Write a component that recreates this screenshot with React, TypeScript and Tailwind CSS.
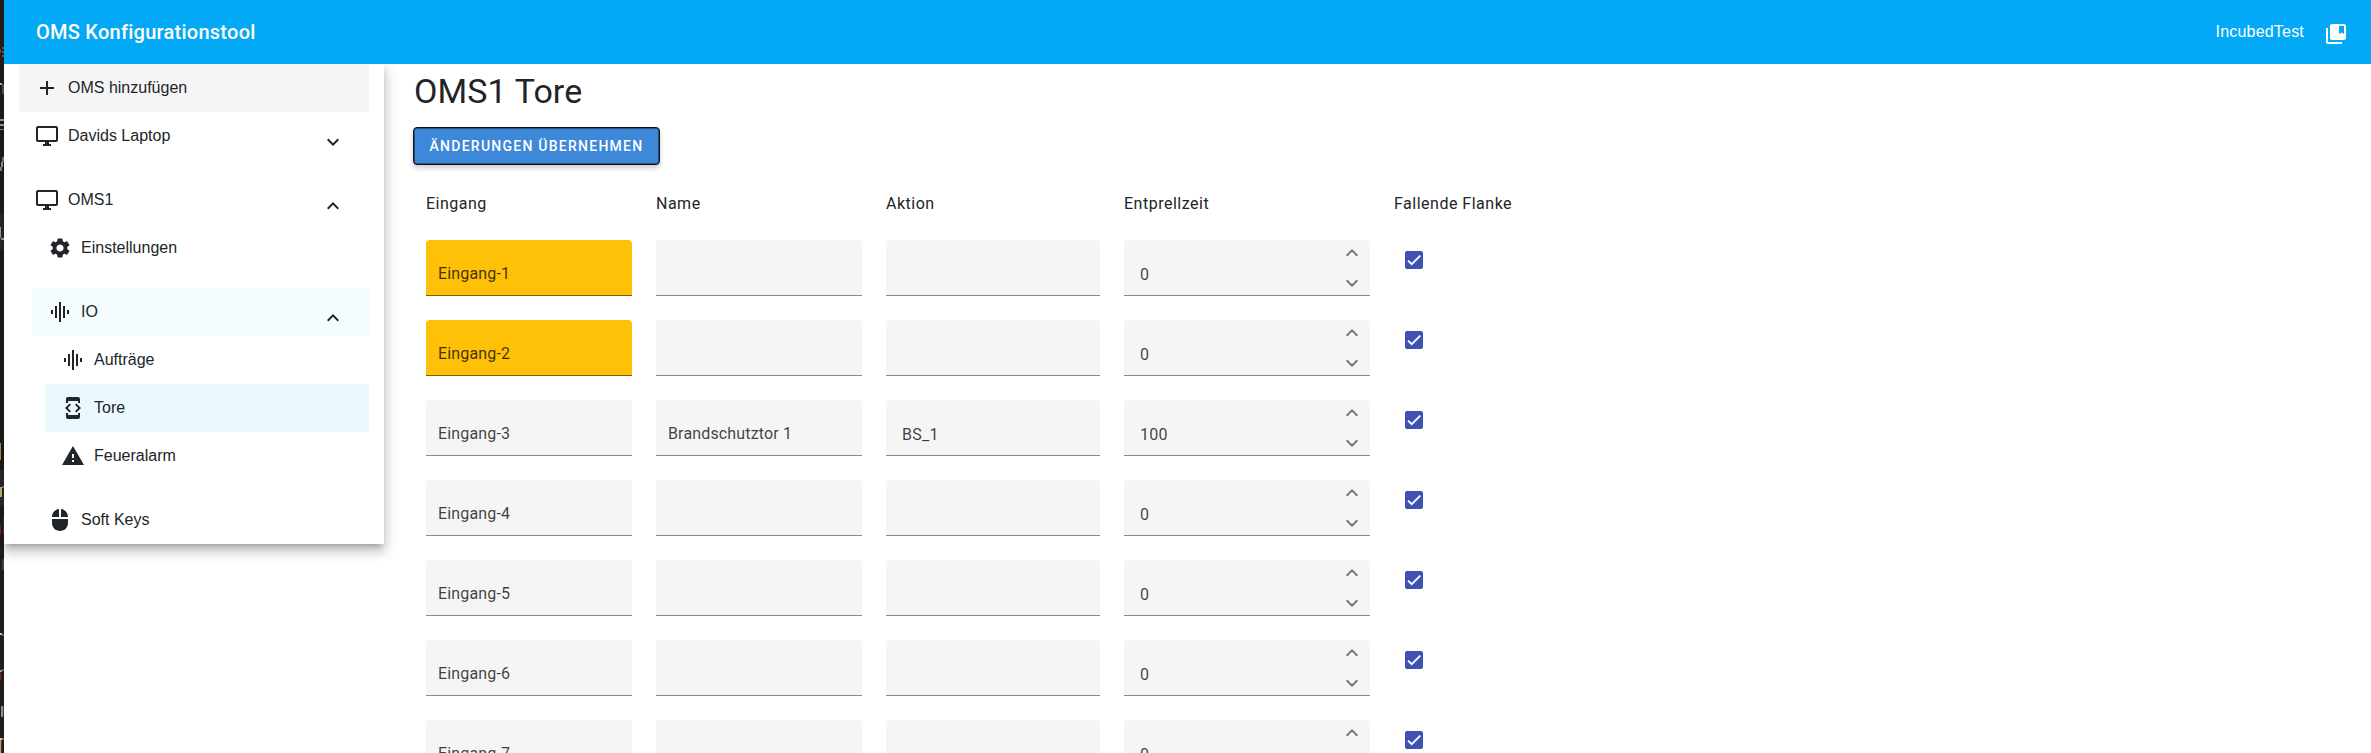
import type { ReactNode } from "react";
import {
  MdAdd,
  MdCollectionsBookmark,
  MdDeveloperMode,
  MdExpandLess,
  MdExpandMore,
  MdGraphicEq,
  MdMouse,
  MdSettings,
  MdWarning,
} from "react-icons/md";

type NavProps = {
  icon: ReactNode;
  label: string;
  className?: string;
  expanded?: boolean;
};

function DesktopIcon() {
  return (
    <svg viewBox="0 0 24 24" className="size-6" fill="currentColor">
      <path d="M21 2H3c-1.1 0-2 .9-2 2v12c0 1.1.9 2 2 2h7v2H8v2h8v-2h-2v-2h7c1.1 0 2-.9 2-2V4c0-1.1-.9-2-2-2zm0 14H3V4h18v12z" />
    </svg>
  );
}

function NavItem({ icon, label, className = "", expanded }: NavProps) {
  return (
    <div className={`flex h-12 shrink-0 items-center pl-4 pr-6 text-[#212529] ${className}`}>
      <span className="size-6 text-[24px]">{icon}</span>
      <span className="ml-[9px] grow font-['Liberation_Sans',Arial,sans-serif] text-[16px] leading-6">{label}</span>
      {expanded !== undefined && (
        <span className="pt-3 text-[24px]">{expanded ? <MdExpandLess /> : <MdExpandMore />}</span>
      )}
    </div>
  );
}

function Sidebar() {
  return (
    <nav className="flex h-[480px] w-[380px] shrink-0 flex-col bg-white pl-[15px] pr-[15px] shadow-[0_5px_5px_-3px_rgba(0,0,0,0.2),0_8px_10px_1px_rgba(0,0,0,0.14),0_3px_14px_2px_rgba(0,0,0,0.12)]">
      <NavItem icon={<MdAdd />} label="OMS hinzufügen" className="bg-[#f5f5f5]" />
      <NavItem icon={<DesktopIcon />} label="Davids Laptop" expanded={false} />
      <NavItem icon={<DesktopIcon />} label="OMS1" expanded className="mt-4" />
      <NavItem icon={<MdSettings />} label="Einstellungen" className="ml-[13px]" />
      <NavItem icon={<MdGraphicEq />} label="IO" expanded className="ml-[13px] mt-4 bg-[#f5fcff]" />
      <NavItem icon={<MdGraphicEq />} label="Aufträge" className="ml-[26px]" />
      <NavItem icon={<MdDeveloperMode />} label="Tore" className="ml-[26px] bg-[#ebf8fe]" />
      <NavItem icon={<MdWarning />} label="Feueralarm" className="ml-[26px]" />
      <NavItem icon={<MdMouse />} label="Soft Keys" className="ml-[13px] mt-4" />
    </nav>
  );
}

type Row = { input: string; name?: string; action?: string; debounce: string; warn?: boolean };

const rows: Row[] = [
  { input: "Eingang-1", debounce: "0", warn: true },
  { input: "Eingang-2", debounce: "0", warn: true },
  { input: "Eingang-3", name: "Brandschutztor 1", action: "BS_1", debounce: "100" },
  { input: "Eingang-4", debounce: "0" },
  { input: "Eingang-5", debounce: "0" },
  { input: "Eingang-6", debounce: "0" },
  { input: "Eingang-7", debounce: "0" },
];

const columns = "grid grid-cols-[206px_206px_214px_246px_200px] gap-x-6";

function Field({ className, children }: { className: string; children?: ReactNode }) {
  return (
    <div className={`flex h-14 rounded-t border-b leading-6 text-black/75 ${className}`}>{children}</div>
  );
}

function Checkbox() {
  return (
    <span className="ml-[11px] mt-[11px] flex size-[18px] items-center justify-center rounded-[2px] bg-[#3f51b5]">
      <svg viewBox="0 0 24 24" className="size-[14px]" fill="none" stroke="white" strokeWidth="3.12">
        <path d="M1.73 12.91 8.1 19.28 22.79 4.59" />
      </svg>
    </span>
  );
}

function TableRow({ row }: { row: Row }) {
  return (
    <div className={`${columns} h-20 shrink-0`}>
      <Field
        className={`pl-3 pt-[22px] tracking-[0.15px] ${row.warn ? "border-[#806105] bg-[#ffc107]" : "border-[#8b8b8b] bg-[#f5f5f5]"}`}
      >
        {row.input}
      </Field>
      <Field className="border-[#8b8b8b] bg-[#f5f5f5] pl-3 pt-[22px] tracking-[0.15px]">{row.name}</Field>
      <Field className="border-[#8b8b8b] bg-[#f5f5f5] pl-4 pt-[23px] tracking-[0.3px]">{row.action}</Field>
      <Field className="justify-between border-[#8b8b8b] bg-[#f5f5f5] pl-4 pr-1.5">
        <span className="pt-[23px] tracking-[0.3px]">{row.debounce}</span>
        <span className="flex flex-col gap-1.5 pt-px text-[24px] text-[#757575]">
          <MdExpandLess />
          <MdExpandMore />
        </span>
      </Field>
      <Checkbox />
    </div>
  );
}

/* [x, y, width, height, colour] of the slivers along the window's left edge */
const slivers: [number, number, number, number, string][] = [
  [0, 49, 1, 4, "#a83232"],
  [2, 47, 2, 2, "#5c5650"],
  [2, 51, 2, 2, "#5c5650"],
  [2, 55, 2, 2, "#5c5650"],
  [0, 83, 2, 2, "#b9b9b9"],
  [2, 84, 2, 10, "#3f5f70"],
  [0, 119, 4, 2, "#a5a5a5"],
  [0, 124, 4, 2, "#a5a5a5"],
  [0, 129, 4, 1, "#8a8a8a"],
  [2, 157, 2, 5, "#6f8494"],
  [1, 162, 2, 5, "#a9a08c"],
  [0, 167, 2, 4, "#8a8a8a"],
  [0, 213, 4, 36, "#2c2b2d"],
  [0, 227, 1, 11, "#b9a37e"],
  [1, 238, 3, 2, "#a5a5a5"],
  [0, 443, 1, 17, "#b8914f"],
  [0, 470, 4, 37, "#2c2b2d"],
  [0, 487, 2, 10, "#cdb77e"],
  [2, 486, 2, 2, "#8d7f5a"],
  [0, 525, 1, 9, "#8c2020"],
  [3, 517, 1, 17, "#3c3a4c"],
  [2, 559, 2, 11, "#2f4a44"],
  [0, 633, 2, 2, "#c9c0c0"],
  [2, 634, 2, 2, "#5a5a55"],
  [0, 670, 2, 2, "#b98f8f"],
  [2, 669, 2, 2, "#5a5a55"],
  [0, 673, 1, 7, "#8c2020"],
  [1, 706, 2, 11, "#7d94a3"],
  [3, 707, 1, 9, "#5b3a2a"],
  [0, 738, 2, 2, "#c4c4b4"],
  [2, 738, 2, 2, "#6b6b66"],
  [0, 740, 1, 13, "#b8a06b"],
  [1, 740, 1, 13, "#6b2a2a"],
];

function LeftEdge() {
  return (
    <svg viewBox="0 0 4 753" className="h-[753px] w-1 shrink-0 bg-[#201e1b]" shapeRendering="crispEdges">
      {slivers.map(([x, y, width, height, fill]) => (
        <rect key={`${x}-${y}`} x={x} y={y} width={width} height={height} fill={fill} />
      ))}
    </svg>
  );
}

export default function App() {
  return (
    <div className="flex h-[753px] w-[2371px] overflow-hidden bg-white font-[Roboto,sans-serif] text-[16px] tracking-[0.5px] text-[#212529]">
      <LeftEdge />
      <div className="flex grow flex-col">
        <header className="z-10 flex h-16 shrink-0 items-center bg-[#03a9f4] pl-8 pr-[23px] text-white">
          <h1 className="grow text-[20px] font-medium tracking-[0.25px]">OMS Konfigurationstool</h1>
          <span className="mr-[20px] font-['Liberation_Sans',Arial,sans-serif] tracking-[0.2px]">IncubedTest</span>
          <MdCollectionsBookmark className="mt-1 text-[24px]" />
        </header>
        <div className="flex min-h-0 grow items-start tracking-normal">
          <Sidebar />
          <main className="flex flex-col pl-[29px] tracking-[0.5px]">
            <h2 className="mt-[7px] pl-px text-[34px] leading-10 tracking-[0.1px]">OMS1 Tore</h2>
            <button className="mt-4 h-[38px] w-[247px] rounded border border-[#101010] bg-[#3e88da] text-[14px] font-medium tracking-[1.25px] text-white shadow-[inset_0_0_0_1px_rgba(20,20,20,0.45),0_3px_5px_rgba(0,0,0,0.2)]">
              ÄNDERUNGEN ÜBERNEHMEN
            </button>
            <div className="flex flex-col pl-[13px]">
              <div className={`${columns} mb-[24px] mt-[27px] leading-6`}>
                <span>Eingang</span>
                <span>Name</span>
                <span>Aktion</span>
                <span>Entprellzeit</span>
                <span>Fallende Flanke</span>
              </div>
              {rows.map((row) => (
                <TableRow key={row.input} row={row} />
              ))}
            </div>
          </main>
        </div>
      </div>
    </div>
  );
}
